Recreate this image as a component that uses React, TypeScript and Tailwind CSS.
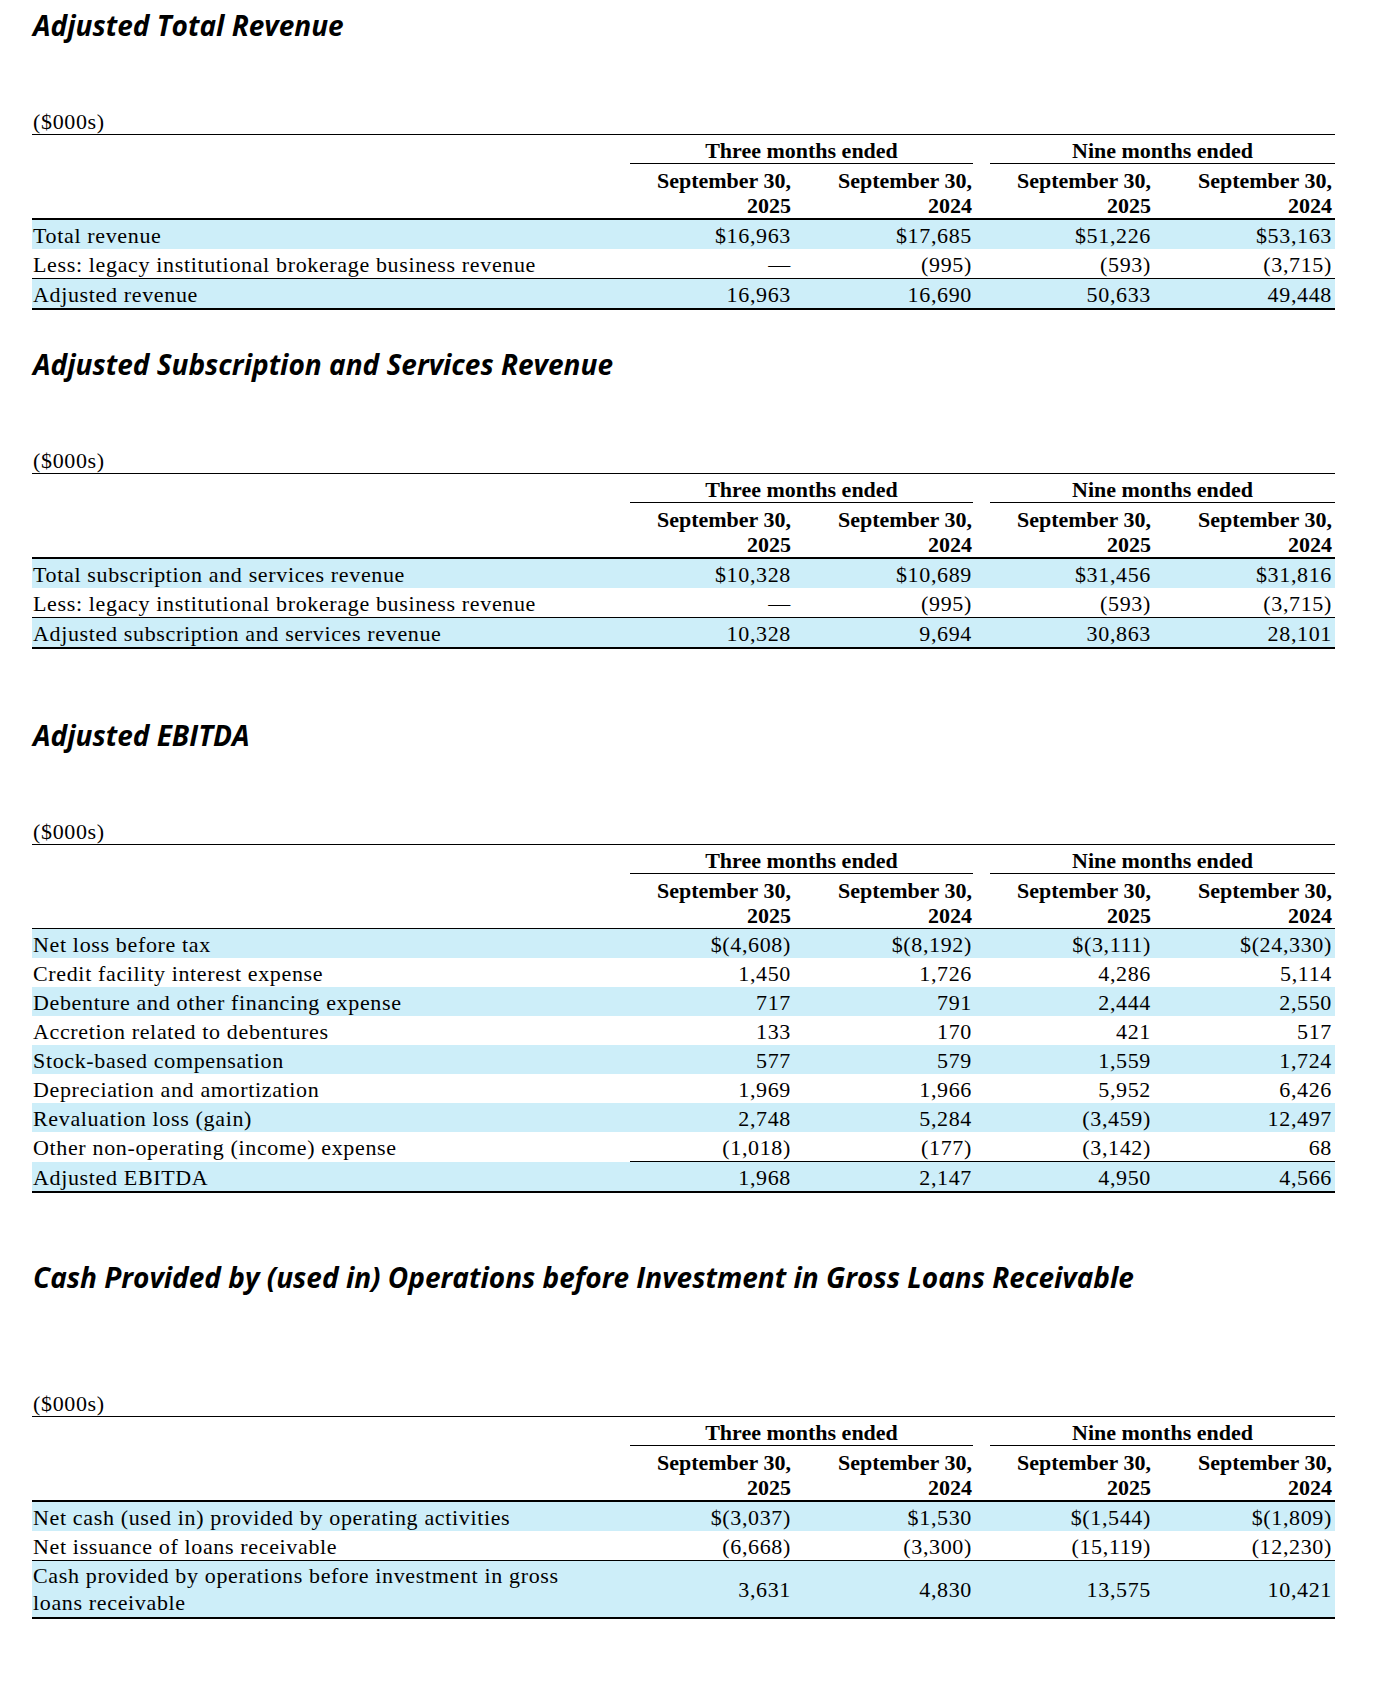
const cols = "grid grid-cols-[598px_165px_178px_17px_165px_180px]";

type RowData = {
  label: React.ReactNode;
  v: string[];
  blue?: boolean;
  line?: "full" | "nums";
  tall?: boolean;
};

function Row({ r }: { r: RowData }) {
  let size = "h-[29px] pt-[3px] leading-[26px]";
  if (r.tall) size = r.line === "full" ? "h-[57px] items-center leading-[27px] border-t border-black" : "h-[56px] items-center leading-[27px]";
  else if (r.line === "full") size = "h-[30px] pt-[3px] leading-[26px] border-t border-black";

  return (
    <>
      {r.line === "nums" && (
        <div className={cols}>
          <div />
          <div className="col-span-5 h-px bg-black" />
        </div>
      )}
      <div className={`${cols} ${size} ${r.blue ? "bg-[#cdeef9]" : "bg-white"}`}>
        <div className="pl-[1px]">{r.label}</div>
        <div className="pr-[4px] text-right">{r.v[0]}</div>
        <div className="pr-[1px] text-right">{r.v[1]}</div>
        <div />
        <div className="pr-[4px] text-right">{r.v[2]}</div>
        <div className="pr-[3px] text-right">{r.v[3]}</div>
      </div>
    </>
  );
}

function Header({ thin }: { thin?: boolean }) {
  return (
    <div className={`font-bold tracking-normal border-black ${thin ? "border-b" : "border-b-2"}`}>
      <div className={cols}>
        <div />
        <div className="col-span-2 border-b border-black pt-[4px] text-center leading-[24px]">Three months ended</div>
        <div />
        <div className="col-span-2 border-b border-black pt-[4px] text-center leading-[24px]">Nine months ended</div>
      </div>
      <div className={`${cols} pt-[4px] leading-[25px]`}>
        <div />
        <div className="pr-[4px] text-right">
          September 30,
          <br />
          2025
        </div>
        <div className="pr-[1px] text-right">
          September 30,
          <br />
          2024
        </div>
        <div />
        <div className="pr-[4px] text-right">
          September 30,
          <br />
          2025
        </div>
        <div className="pr-[3px] text-right">
          September 30,
          <br />
          2024
        </div>
      </div>
    </div>
  );
}

function Section({
  title,
  rows,
  className,
  unitGap,
  thin,
}: {
  title: string;
  rows: RowData[];
  className: string;
  unitGap: string;
  thin?: boolean;
}) {
  return (
    <section className={className}>
      <h2 className="pl-[1px] pt-[7px] font-['Open_Sans',sans-serif] text-[28px] font-bold italic leading-[36px] text-black">
        {title}
      </h2>
      <div className={`${unitGap} font-['Liberation_Serif',serif] text-[22px] tracking-[0.65px] text-black`}>
        <div className="border-b border-black pl-[1px] leading-[24px]">($000s)</div>
        <Header thin={thin} />
        <div className="border-b-2 border-black">
          {rows.map((r, i) => (
            <Row key={i} r={r} />
          ))}
        </div>
      </div>
    </section>
  );
}

const legacy = "Less: legacy institutional brokerage business revenue";

const revenueRows: RowData[] = [
  { label: "Total revenue", v: ["$16,963", "$17,685", "$51,226", "$53,163"], blue: true },
  { label: legacy, v: ["—", "(995)", "(593)", "(3,715)"] },
  { label: "Adjusted revenue", v: ["16,963", "16,690", "50,633", "49,448"], blue: true, line: "full" },
];

const subscriptionRows: RowData[] = [
  { label: "Total subscription and services revenue", v: ["$10,328", "$10,689", "$31,456", "$31,816"], blue: true },
  { label: legacy, v: ["—", "(995)", "(593)", "(3,715)"] },
  { label: "Adjusted subscription and services revenue", v: ["10,328", "9,694", "30,863", "28,101"], blue: true, line: "full" },
];

const ebitdaRows: RowData[] = [
  { label: "Net loss before tax", v: ["$(4,608)", "$(8,192)", "$(3,111)", "$(24,330)"], blue: true },
  { label: "Credit facility interest expense", v: ["1,450", "1,726", "4,286", "5,114"] },
  { label: "Debenture and other financing expense", v: ["717", "791", "2,444", "2,550"], blue: true },
  { label: "Accretion related to debentures", v: ["133", "170", "421", "517"] },
  { label: "Stock-based compensation", v: ["577", "579", "1,559", "1,724"], blue: true },
  { label: "Depreciation and amortization", v: ["1,969", "1,966", "5,952", "6,426"] },
  { label: "Revaluation loss (gain)", v: ["2,748", "5,284", "(3,459)", "12,497"], blue: true },
  { label: "Other non-operating (income) expense", v: ["(1,018)", "(177)", "(3,142)", "68"] },
  { label: "Adjusted EBITDA", v: ["1,968", "2,147", "4,950", "4,566"], blue: true, line: "nums" },
];

const cashRows: RowData[] = [
  { label: "Net cash (used in) provided by operating activities", v: ["$(3,037)", "$1,530", "$(1,544)", "$(1,809)"], blue: true },
  { label: "Net issuance of loans receivable", v: ["(6,668)", "(3,300)", "(15,119)", "(12,230)"] },
  {
    label: (
      <>
        Cash provided by operations before investment in gross
        <br />
        loans receivable
      </>
    ),
    v: ["3,631", "4,830", "13,575", "10,421"],
    blue: true,
    line: "full",
    tall: true,
  },
];

export default function App() {
  return (
    <div className="min-h-[1693px] w-[1373px] bg-white pl-[32px]">
      <div className="w-[1303px]">
        <Section title="Adjusted Total Revenue" rows={revenueRows} className="" unitGap="mt-[67px]" />
        <Section title="Adjusted Subscription and Services Revenue" rows={subscriptionRows} className="mt-[29px]" unitGap="mt-[67px]" />
        <Section title="Adjusted EBITDA" rows={ebitdaRows} className="mt-[61px]" unitGap="mt-[67px]" thin />
        <Section
          title="Cash Provided by (used in) Operations before Investment in Gross Loans Receivable"
          rows={cashRows}
          className="mt-[59px]"
          unitGap="mt-[97px]"
        />
      </div>
    </div>
  );
}
